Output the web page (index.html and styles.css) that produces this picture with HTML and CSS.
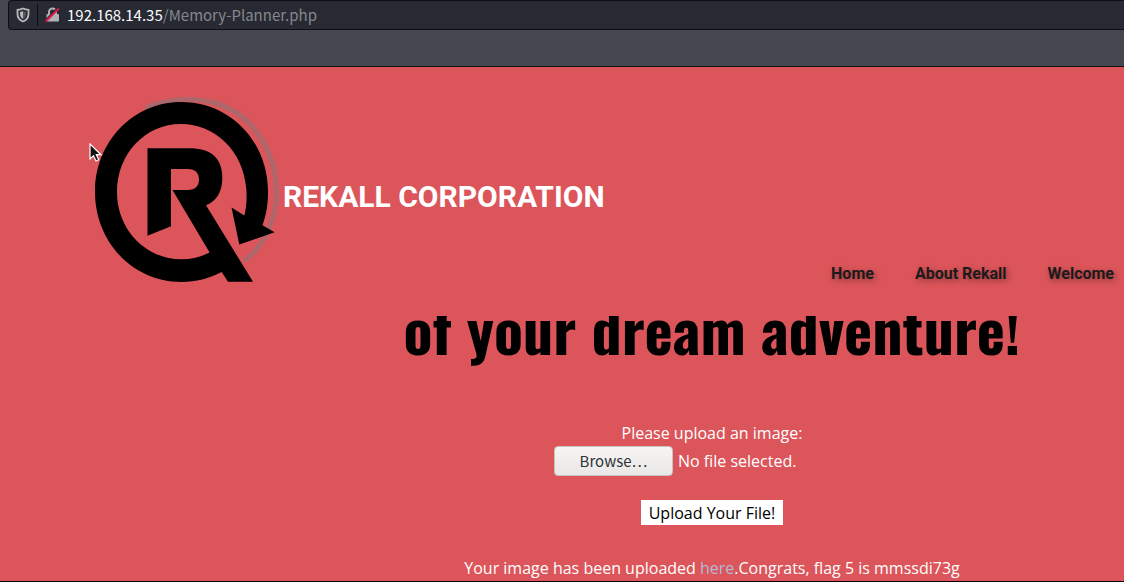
FILE: index.html
```html
<!DOCTYPE html>
<html lang="en">
<head>
<meta charset="utf-8">
<title>Rekall Corporation - Memory Planner</title>
<link rel="stylesheet" href="styles.css">
</head>
<body>
<div class="toolbar">
  <div class="urlbar">
    <svg class="shield" width="14" height="16" viewBox="0 0 14 16" aria-hidden="true">
      <path d="M7 1.5C5.300 2.300 3.300 2.700 1.500 2.800V7C1.500 10.700 3.600 13.300 7 14.500C10.400 13.300 12.500 10.700 12.500 7V2.800C10.700 2.700 8.700 2.300 7 1.500Z" fill="none" stroke="#b8b9bd" stroke-width="1.800"/>
      <path d="M7 4.200V12C5 11 4 9.300 4 7V4.900Z" fill="#b8b9bd"/>
      <path d="M7 4.200V12C9 11 10 9.300 10 7V4.900Z" fill="#55575f"/>
    </svg>
    <span class="divider"></span>
    <svg class="lock" width="16" height="16" viewBox="0 0 16 16" aria-hidden="true">
      <path d="M4 7.500V5a3.500 3.500 0 0 1 7 0V7.500" fill="none" stroke="#b0b1b5" stroke-width="2"/>
      <rect x="1.500" y="7" width="12.500" height="7.500" rx="1" fill="#b0b1b5"/>
      <path d="M0 13.500 13 .500" stroke="#282a33" stroke-width="1.500"/>
      <path d="M.800 14.500 13.800 1.500" stroke="#ee1546" stroke-width="1.800"/>
    </svg>
    <span class="address"><span class="host">192.168.14.35</span>/Memory-Planner.php</span>
  </div>
</div>
<div class="page">
  <header class="brand">
    <svg class="logo" width="200" height="200" viewBox="80 90 200 200" role="img" aria-label="Rekall logo">
      <defs>
        <filter id="soft" x="-20%" y="-20%" width="140%" height="140%"><feGaussianBlur stdDeviation="1.500"/></filter>
      </defs>
      <path d="M145 108C165 99 196 96 221 105C258 119 280 160 276 202C272 229 260 249 244 261" fill="none" stroke="#8c7378" stroke-width="3" filter="url(#soft)"/>
      <path fill="#000" fill-rule="evenodd" d="M262.500 225.200L274.600 232.300L239.300 244.600L231.500 207.500L244.300 215.500C246.500 207 247 199 246.300 189C243.500 151 215 124 181 124C145 124 117 154 117 192C117 230 146 259.300 181.500 259.300C191.500 259.300 201 257 209.600 252.600L172.500 190H188C195 190 199 186 199 179.500C199 173 195 169 188 169H171V226.300L147.500 235.700V148.300H189C211 148.300 222.300 158 222.300 177.500C222.300 191.500 217 201 206 205.300L253 281.700H228L221.700 272C209 278.500 196 282 181.500 282C133 282 95 242 95 192C95 142 133 102 181 102C231 102 268 142 268 192C268 204 266.500 214 262.500 225.200Z"/>
    </svg>
    <h1 class="name">REKALL CORPORATION</h1>
  </header>
  <nav class="nav">
    <a href="#home">Home</a>
    <a href="#about">About Rekall</a>
    <a href="#welcome">Welcome</a>
  </nav>
  <main class="planner">
    <h2 class="headline">of your dream adventure!</h2>
    <form class="upload">
      <label for="image">Please upload an image:</label>
      <div class="picker">
        <input class="file" type="file" id="image" tabindex="-1">
        <button class="browse" type="button">Browse…</button>
        <span>No file selected.</span>
      </div>
      <button class="submit" type="submit">Upload Your File!</button>
    </form>
    <p class="result">Your image has been uploaded <a href="#here">here</a>.Congrats, flag 5 is mmssdi73g</p>
  </main>
</div>
<svg class="cursor" width="14" height="20" viewBox="0 0 14 20" aria-hidden="true">
  <path d="M1 1V16L4.500 12.800L7 18L9.700 16.700L7.300 11.700H12Z" fill="#111" stroke="#fff" stroke-width="1.200"/>
</svg>
</body>
</html>
```
FILE: styles.css
```css
* {
  box-sizing: border-box;
}

body {
  margin: 0;
  min-height: 100vh;
  display: flex;
  flex-direction: column;
  background: #dc555a;
  color: #fff;
  font-family: "Open Sans", "Noto Sans", sans-serif;
  font-size: 16px;
  line-height: 24px;
}

.toolbar {
  height: 67px;
  padding-left: 8px;
  background: #44474e;
  border-bottom: 1px solid #101114;
}

.urlbar {
  display: flex;
  align-items: center;
  height: 30px;
  padding-left: 7px;
  background: #282a33;
  border: 1px solid #0d0e12;
  border-right: 0;
  border-radius: 4px 0 0 4px;
}

.divider {
  width: 1px;
  height: 22px;
  margin: 0 7px;
  background: #0d0e12;
}

.address {
  margin-left: 6px;
  color: #85878d;
  font-family: "Noto Sans CJK SC", "Noto Sans", sans-serif;
  font-size: 15px;
}

.host {
  color: #fbfbfe;
}

.page {
  flex: 1;
  display: flex;
  flex-direction: column;
  padding-top: 23px;
  border-bottom: 1px solid #000;
}

.brand {
  display: flex;
  align-items: center;
  padding-left: 80px;
  height: 168px;
}

.logo {
  flex: none;
  align-self: flex-start;
}

.name {
  margin: 46px 0 0 3px;
  font-family: Roboto, sans-serif;
  font-size: 30px;
  line-height: 36px;
  font-weight: 700;
}

.nav {
  display: flex;
  justify-content: flex-end;
  gap: 41px;
  padding: 4px 10px 0 0;
  font-family: Roboto, sans-serif;
  font-weight: 700;
}

.nav a {
  color: #1d1a1a;
  text-decoration: none;
  text-shadow: 2px 2px 6px rgba(0, 0, 0, 0.4);
}

.planner {
  display: flex;
  flex-direction: column;
  align-items: center;
  padding-left: 300px;
}

/* The scrolling banner shows its line cropped along the top edge. */
.headline {
  margin: 30px 0 0;
  padding-bottom: 40px;
  overflow: hidden;
  color: #000;
  font-family: Oswald, "Roboto Condensed", sans-serif;
  font-size: 60px;
  line-height: 24px;
  font-weight: 900;
  white-space: nowrap;
}

.upload {
  display: flex;
  flex-direction: column;
  align-items: center;
  margin-top: 41px;
}

.picker {
  position: relative;
  display: flex;
  align-items: center;
  gap: 5px;
  width: 316px;
  margin: 1px 0 24px;
}

.file {
  position: absolute;
  inset: 0;
  width: 100%;
  opacity: 0;
  pointer-events: none;
}

.browse {
  width: 119px;
  height: 30px;
  padding: 0;
  border: 1px solid #c9c3bd;
  border-radius: 4px;
  background: linear-gradient(#f6f5f4, #e9e7e5);
  color: #2e3436;
  font: inherit;
  font-family: "Noto Sans CJK SC", "Noto Sans", sans-serif;
  font-size: 15px;
}

.submit {
  padding: 1px 8px 0;
  border: 0;
  background: #fff;
  color: #000;
  font: inherit;
}

.result {
  margin: 31px 0 0;
}

.result a {
  color: #b3bad8;
  text-decoration: none;
}

.cursor {
  position: absolute;
  left: 89px;
  top: 143px;
}
```
